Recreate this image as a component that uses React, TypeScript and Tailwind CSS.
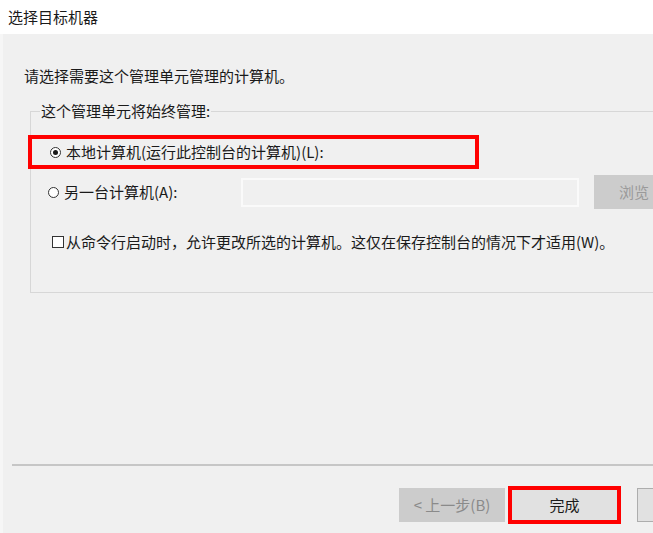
import React from "react";

const font = { fontFamily: '"Noto Sans CJK SC", "Microsoft YaHei", "Noto Sans", sans-serif' };

function Radio({ checked }: { checked?: boolean }) {
  return (
    <span className="flex h-[11px] w-[11px] shrink-0 items-center justify-center rounded-full border border-[#333333] bg-white">
      {checked && <span className="h-[5px] w-[5px] rounded-full bg-[#1a1a1a]" />}
    </span>
  );
}

export default function App() {
  return (
    <div
      className="flex h-[533px] w-[653px] flex-col overflow-hidden bg-[#f0f0f0] text-[15px] leading-[22px] text-[#1a1a1a]"
      style={font}
    >
      <div className="flex h-[34px] shrink-0 items-center bg-white pl-[8px]">选择目标机器</div>
      <div className="flex flex-1 flex-col border-l-[3px] border-[#f6f6f6]">
        <div className="ml-[21px] mt-[31px]">请选择需要这个管理单元管理的计算机。</div>
        <fieldset className="ml-[27px] mt-[13px] w-[700px] shrink-0 border border-[#d7d7d7] pb-[39px]">
          <legend className="ml-[9px] px-[1px] leading-[22px]">这个管理单元将始终管理:</legend>
          <div className="ml-[-3px] mt-[13px] flex h-[34px] w-[451px] items-center border-4 border-[#ff0000] pl-[18px]">
            <Radio checked />
            <span className="ml-[5px]">本地计算机(运行此控制台的计算机)(L):</span>
          </div>
          <div className="mt-[6px] flex h-[34px] items-center pl-[17px]">
            <div className="flex w-[193px] shrink-0 items-center">
              <Radio />
              <span className="ml-[5px]">另一台计算机(A):</span>
            </div>
            <div className="h-[29px] w-[338px] shrink-0 border-2 border-[#fafafa] bg-[#f0f0f0]" />
            <div className="ml-[15px] flex h-[34px] w-[112px] shrink-0 items-center bg-[#cccccc] pl-[25px] text-[#9a9a9a]">
              浏览
            </div>
          </div>
          <div className="mt-[22px] flex items-center pl-[21px]">
            <span className="h-[12px] w-[12px] shrink-0 border border-[#333333] bg-white" />
            <span className="ml-[2px]">从命令行启动时，允许更改所选的计算机。这仅在保存控制台的情况下才适用(W)。</span>
          </div>
        </fieldset>
        <div className="ml-[9px] mt-[171px] h-[2px] shrink-0 bg-[#c6c6c6]" />
        <div className="mt-[20px] flex items-center pl-[396px]">
          <div className="flex h-[34px] w-[106px] shrink-0 items-center justify-center bg-[#cccccc] text-[#8a8a8a]">
            &lt; 上一步(B)
          </div>
          <div className="ml-[3px] flex h-[38px] w-[113px] shrink-0 items-center justify-center border-4 border-[#ff0000] bg-[#e1e1e1]">
            完成
          </div>
          <div className="ml-[16px] h-[34px] w-[80px] shrink-0 border border-[#adadad] bg-[#e1e1e1]" />
        </div>
      </div>
    </div>
  );
}
